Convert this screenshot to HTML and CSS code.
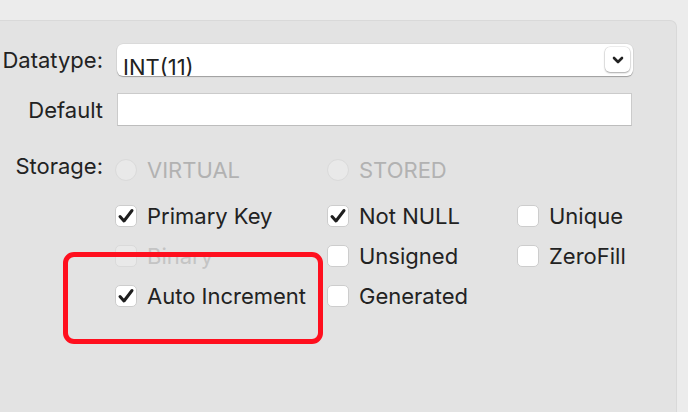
FILE: index.html
```html
<!DOCTYPE html>
<html lang="en">
<head>
  <meta charset="UTF-8" />
  <meta name="viewport" content="width=device-width, initial-scale=1" />
  <title>Column Options</title>
  <link rel="stylesheet" href="styles.css">
</head>
<body>

  <div class="panel">
    <div class="row row-datatype">
      <span class="label">Datatype:</span>
      <div class="select">
        <span class="select-value">INT(11)</span>
        <span class="select-button">
          <svg width="12" height="8" viewBox="0 0 12 8"><path d="M2 2 L6 6 L10 2" fill="none" stroke="#222" stroke-width="2.6" stroke-linecap="round" stroke-linejoin="round"/></svg>
        </span>
      </div>
    </div>

    <div class="row row-default">
      <span class="label">Default</span>
      <input type="text" class="input" />
    </div>

    <div class="row row-storage">
      <span class="label label-storage">Storage:</span>
      <div class="options">
        <span class="option disabled"><span class="radio"></span>VIRTUAL</span>
        <span class="option disabled"><span class="radio"></span>STORED</span>
      </div>
    </div>

    <div class="row row-checks">
      <span class="label"></span>
      <div class="options checks">
        <span class="option"><span class="box checked"><svg width="22" height="22" viewBox="0 0 22 22"><path d="M5 11.5 L9 16 L17 5.5" fill="none" stroke="#1e1e1e" stroke-width="3" stroke-linecap="round" stroke-linejoin="round"/></svg></span>Primary Key</span>
        <span class="option"><span class="box checked"><svg width="22" height="22" viewBox="0 0 22 22"><path d="M5 11.5 L9 16 L17 5.5" fill="none" stroke="#1e1e1e" stroke-width="3" stroke-linecap="round" stroke-linejoin="round"/></svg></span>Not NULL</span>
        <span class="option"><span class="box"></span>Unique</span>

        <span class="option faint"><span class="box"></span>Binary</span>
        <span class="option"><span class="box"></span>Unsigned</span>
        <span class="option"><span class="box"></span>ZeroFill</span>

        <span class="option"><span class="box checked"><svg width="22" height="22" viewBox="0 0 22 22"><path d="M5 11.5 L9 16 L17 5.5" fill="none" stroke="#1e1e1e" stroke-width="3" stroke-linecap="round" stroke-linejoin="round"/></svg></span>Auto Increment</span>
        <span class="option"><span class="box"></span>Generated</span>
      </div>
    </div>
  </div>

  <!-- annotation drawn over the form -->
  <div class="highlight"></div>

</body>
</html>
```

FILE: styles.css
```css
/* Window background */
body {
  margin: 0;
  height: 412px;
  overflow: hidden;
  background: #ececec;
  font-family: Inter, "Noto Sans", sans-serif;
  font-size: 22px;
  color: #222;
  position: relative;
}

/* Grouped panel */
.panel {
  box-sizing: border-box;
  margin: 20px 11px 0 -1px;
  height: 392px;
  padding-top: 23px;
  background: #e3e3e3;
  border: 1px solid #d9d9d9;
  border-bottom: none;
  border-top-right-radius: 7px;
}

.row {
  display: grid;
  grid-template-columns: 117px 516px;
  align-items: center;
}

.label {
  padding-right: 14px;
  text-align: right;
  white-space: nowrap;
}

/* Popup button */
.select {
  position: relative;
  height: 32px;
  overflow: hidden;
  background: #fff;
  border-radius: 6px;
  box-shadow: 0 1px 1px rgba(0, 0, 0, 0.28), 0 0 0 0.5px rgba(0, 0, 0, 0.08);
}

.select-value {
  display: block;
  padding: 11px 0 0 6px;
  line-height: 24px;
}

.select-button {
  position: absolute;
  top: 3px;
  right: 3px;
  width: 25px;
  height: 25px;
  display: flex;
  align-items: center;
  justify-content: center;
  background: #fff;
  border-radius: 5px;
  box-shadow: 0 1px 2px rgba(0, 0, 0, 0.3), 0 0 0 0.5px rgba(0, 0, 0, 0.12);
}

/* Text field */
.row-default {
  margin-top: 17px;
}

.input {
  box-sizing: border-box;
  width: 515px;
  height: 33px;
  margin: 0;
  border: 1px solid #cbcbcb;
  border-bottom-color: #bdbdbd;
  background: #fff;
  outline: none;
}

/* Radio and checkbox options */
.row-storage {
  margin-top: 24px;
}

.label-storage {
  padding-bottom: 8px;
}

.options {
  display: grid;
  grid-template-columns: 212px 190px auto;
  grid-auto-rows: 40px;
  margin-left: -2px;
}

.checks {
  margin-top: 6px;
}

.row-checks {
  align-items: start;
}

.option {
  display: flex;
  align-items: center;
  gap: 10px;
  white-space: nowrap;
}

.radio,
.box {
  box-sizing: border-box;
  flex: none;
  width: 22px;
  height: 22px;
  background: #fff;
  border: 1px solid #cdcdcd;
}

.radio {
  border-radius: 50%;
}

.box {
  border-radius: 5px;
  position: relative;
}

.box svg {
  position: absolute;
  top: -1px;
  left: -1px;
}

.disabled {
  color: #b2b2b2;
}

.disabled .radio {
  background: #e9e9e9;
  border-color: #dadada;
}

.faint {
  color: #c4c4c4;
}

.faint .box {
  background: #e9e9e9;
  border-color: #dadada;
}

/* Red annotation box */
.highlight {
  position: absolute;
  left: 63px;
  top: 252px;
  width: 260px;
  height: 92px;
  box-sizing: border-box;
  border: 5px solid #ff0f1e;
  border-radius: 11px;
}
```
